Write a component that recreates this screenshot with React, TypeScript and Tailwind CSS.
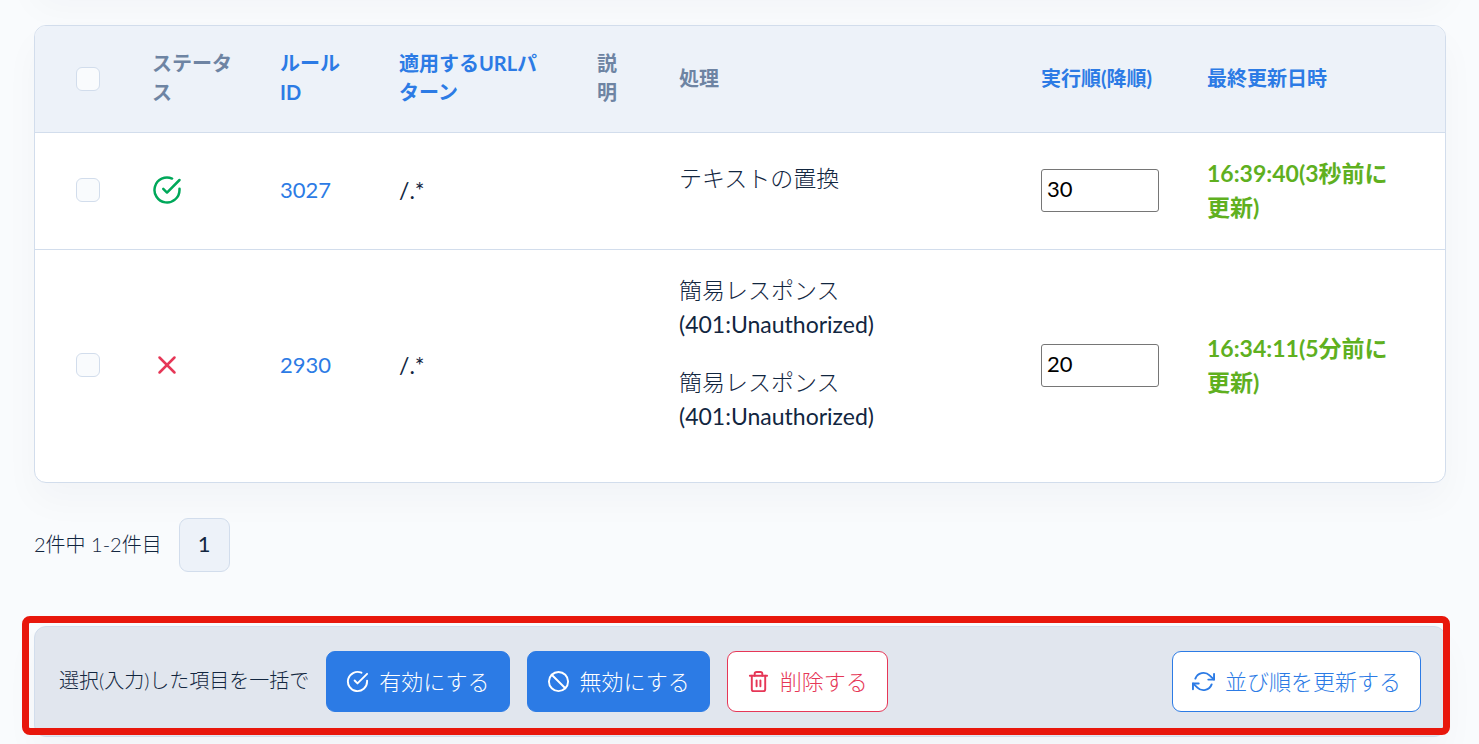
import { useState } from "react";
import { FiCheckCircle, FiRefreshCw, FiSlash, FiTrash2, FiX } from "react-icons/fi";

interface Action {
  name: string;
  detail?: string;
}

interface Rule {
  id: number;
  enabled: boolean;
  pattern: string;
  actions: Action[];
  order: number;
  updated: string;
}

const rules: Rule[] = [
  {
    id: 3027,
    enabled: true,
    pattern: "/.*",
    actions: [{ name: "テキストの置換" }],
    order: 30,
    updated: "16:39:40(3秒前に更新)",
  },
  {
    id: 2930,
    enabled: false,
    pattern: "/.*",
    actions: [
      { name: "簡易レスポンス", detail: "(401:Unauthorized)" },
      { name: "簡易レスポンス", detail: "(401:Unauthorized)" },
    ],
    order: 20,
    updated: "16:34:11(5分前に更新)",
  },
];

const th = "px-6 pt-[23px] pb-[25px] text-left align-middle font-bold";
const td = "px-6 pt-[23px] pb-[25px] align-middle";
const button =
  "inline-flex items-center gap-[10px] rounded-[9px] border px-[19px] py-3 leading-[35px] whitespace-nowrap";

function Checkbox({ label, checked, onChange }: { label: string; checked: boolean; onChange: () => void }) {
  return (
    <input
      type="checkbox"
      aria-label={label}
      checked={checked}
      onChange={onChange}
      className="block size-6 appearance-none rounded-md border border-[#d2ddec] bg-[#f9fbfd] checked:bg-[#2c7be5]"
    />
  );
}

export default function App() {
  const [selected, setSelected] = useState<number[]>([]);
  const allSelected = selected.length === rules.length;

  const toggle = (id: number) =>
    setSelected((prev) => (prev.includes(id) ? prev.filter((x) => x !== id) : [...prev, id]));

  return (
    <div className="min-h-screen overflow-hidden bg-[#f9fbfd] pr-[33px] pl-[34px] font-['Lato','Noto_Sans_CJK_JP',sans-serif] text-[22px] leading-[34px] font-light text-[#12263f]">
      {/* Bottom of the card above */}
      <div className="-mt-[59px] h-12 rounded-xl border border-[#d2ddec] bg-white shadow-[0_18px_36px_rgba(18,38,63,0.03)]" />

      {/* Rule table */}
      <div className="mt-9 overflow-hidden rounded-xl border border-[#d2ddec] bg-white shadow-[0_18px_36px_rgba(18,38,63,0.03)]">
        <table className="w-full table-fixed">
          <colgroup>
            <col className="w-[93px]" />
            <col className="w-32" />
            <col className="w-[119px]" />
            <col className="w-[198px]" />
            <col className="w-[82px]" />
            <col />
            <col className="w-[166px]" />
            <col className="w-[262px]" />
          </colgroup>
          <thead className="border-b border-[#d2ddec] bg-[#edf2f9] text-[20px] leading-[29px] text-[#6e84a3]">
            <tr>
              <th className="py-6 pl-[41px] align-middle">
                <Checkbox
                  label="すべて選択"
                  checked={allSelected}
                  onChange={() => setSelected(allSelected ? [] : rules.map((r) => r.id))}
                />
              </th>
              <th className={th}>ステータス</th>
              <th className={th}>
                <a href="#id" className="text-[#2c7be5]">ルール ID</a>
              </th>
              <th className={th}>
                <a href="#pattern" className="text-[#2c7be5]">適用するURLパターン</a>
              </th>
              <th className={th}>説明</th>
              <th className={th}>処理</th>
              <th className={th}>
                <a href="#order" className="whitespace-nowrap text-[#2c7be5]">実行順(降順)</a>
              </th>
              <th className={th}>
                <a href="#updated" className="text-[#2c7be5]">最終更新日時</a>
              </th>
            </tr>
          </thead>
          <tbody className="divide-y divide-[#d2ddec]">
            {rules.map((rule) => (
              <tr key={rule.id}>
                <td className="pt-[23px] pb-[25px] pl-[41px] align-middle">
                  <Checkbox
                    label={`ルール ${rule.id} を選択`}
                    checked={selected.includes(rule.id)}
                    onChange={() => toggle(rule.id)}
                  />
                </td>
                <td className={td}>
                  {rule.enabled ? (
                    <FiCheckCircle className="size-[30px] text-[#00a85a]" />
                  ) : (
                    <FiX className="size-[30px] text-[#e63757]" />
                  )}
                </td>
                <td className={td}>
                  <a href={`#rule-${rule.id}`} className="font-normal text-[#2c7be5]">{rule.id}</a>
                </td>
                <td className={`${td} text-[23px] font-normal`}>{rule.pattern}</td>
                <td className={td}></td>
                <td className={`${td} text-[23px]`}>
                  {rule.actions.map((action, i) => (
                    <p key={i} className="mb-6">
                      {action.name}
                      {action.detail && <span className="block font-normal">{action.detail}</span>}
                    </p>
                  ))}
                </td>
                <td className={td}>
                  <input
                    type="text"
                    inputMode="numeric"
                    aria-label={`ルール ${rule.id} の実行順`}
                    defaultValue={rule.order}
                    className="block h-[43px] w-full rounded-[3px] border border-[#767676] bg-white px-[5px] pb-[3px] font-normal text-black"
                  />
                </td>
                <td className="pt-[23px] pr-12 pb-[25px] pl-6 align-middle text-[23px] font-bold text-[#5fb01f]">
                  {rule.updated}
                </td>
              </tr>
            ))}
          </tbody>
        </table>
      </div>

      {/* Pagination */}
      <nav className="mt-[35px] flex items-center gap-[17px]">
        <span className="pb-[3px] text-[20px]">2件中 1-2件目</span>
        <a
          href="#page-1"
          className="flex h-[54px] w-[51px] items-center justify-center rounded-[9px] border border-[#d2ddec] bg-[#edf2f9] pb-[2px] font-normal"
        >
          1
        </a>
      </nav>

      {/* Bulk actions */}
      <div className="relative mt-[54px]">
        <div className="flex items-center gap-[17px] rounded-xl border border-[#d2ddec] bg-[#e1e6ee] p-6 shadow-[0_18px_36px_rgba(18,38,63,0.03)]">
          <span className="pb-[3px] text-[20px] whitespace-nowrap">選択(入力)した項目を一括で</span>
          <button type="button" className={`${button} border-[#2c7be5] bg-[#2c7be5] text-white`}>
            <FiCheckCircle className="size-[23px]" />
            有効にする
          </button>
          <button type="button" className={`${button} border-[#2c7be5] bg-[#2c7be5] text-white`}>
            <FiSlash className="size-[23px]" />
            無効にする
          </button>
          <button type="button" className={`${button} border-[#e63757] bg-white text-[#e63757]`}>
            <FiTrash2 className="size-[23px]" />
            削除する
          </button>
          <button type="button" className={`${button} ml-auto border-[#2c7be5] bg-white text-[#2c7be5]`}>
            <FiRefreshCw className="size-[23px]" />
            並び順を更新する
          </button>
        </div>
        <div className="pointer-events-none absolute -top-[10px] -right-1 bottom-[2px] -left-3 rounded-lg border-[7px] border-[#e8170c]" />
      </div>
    </div>
  );
}
